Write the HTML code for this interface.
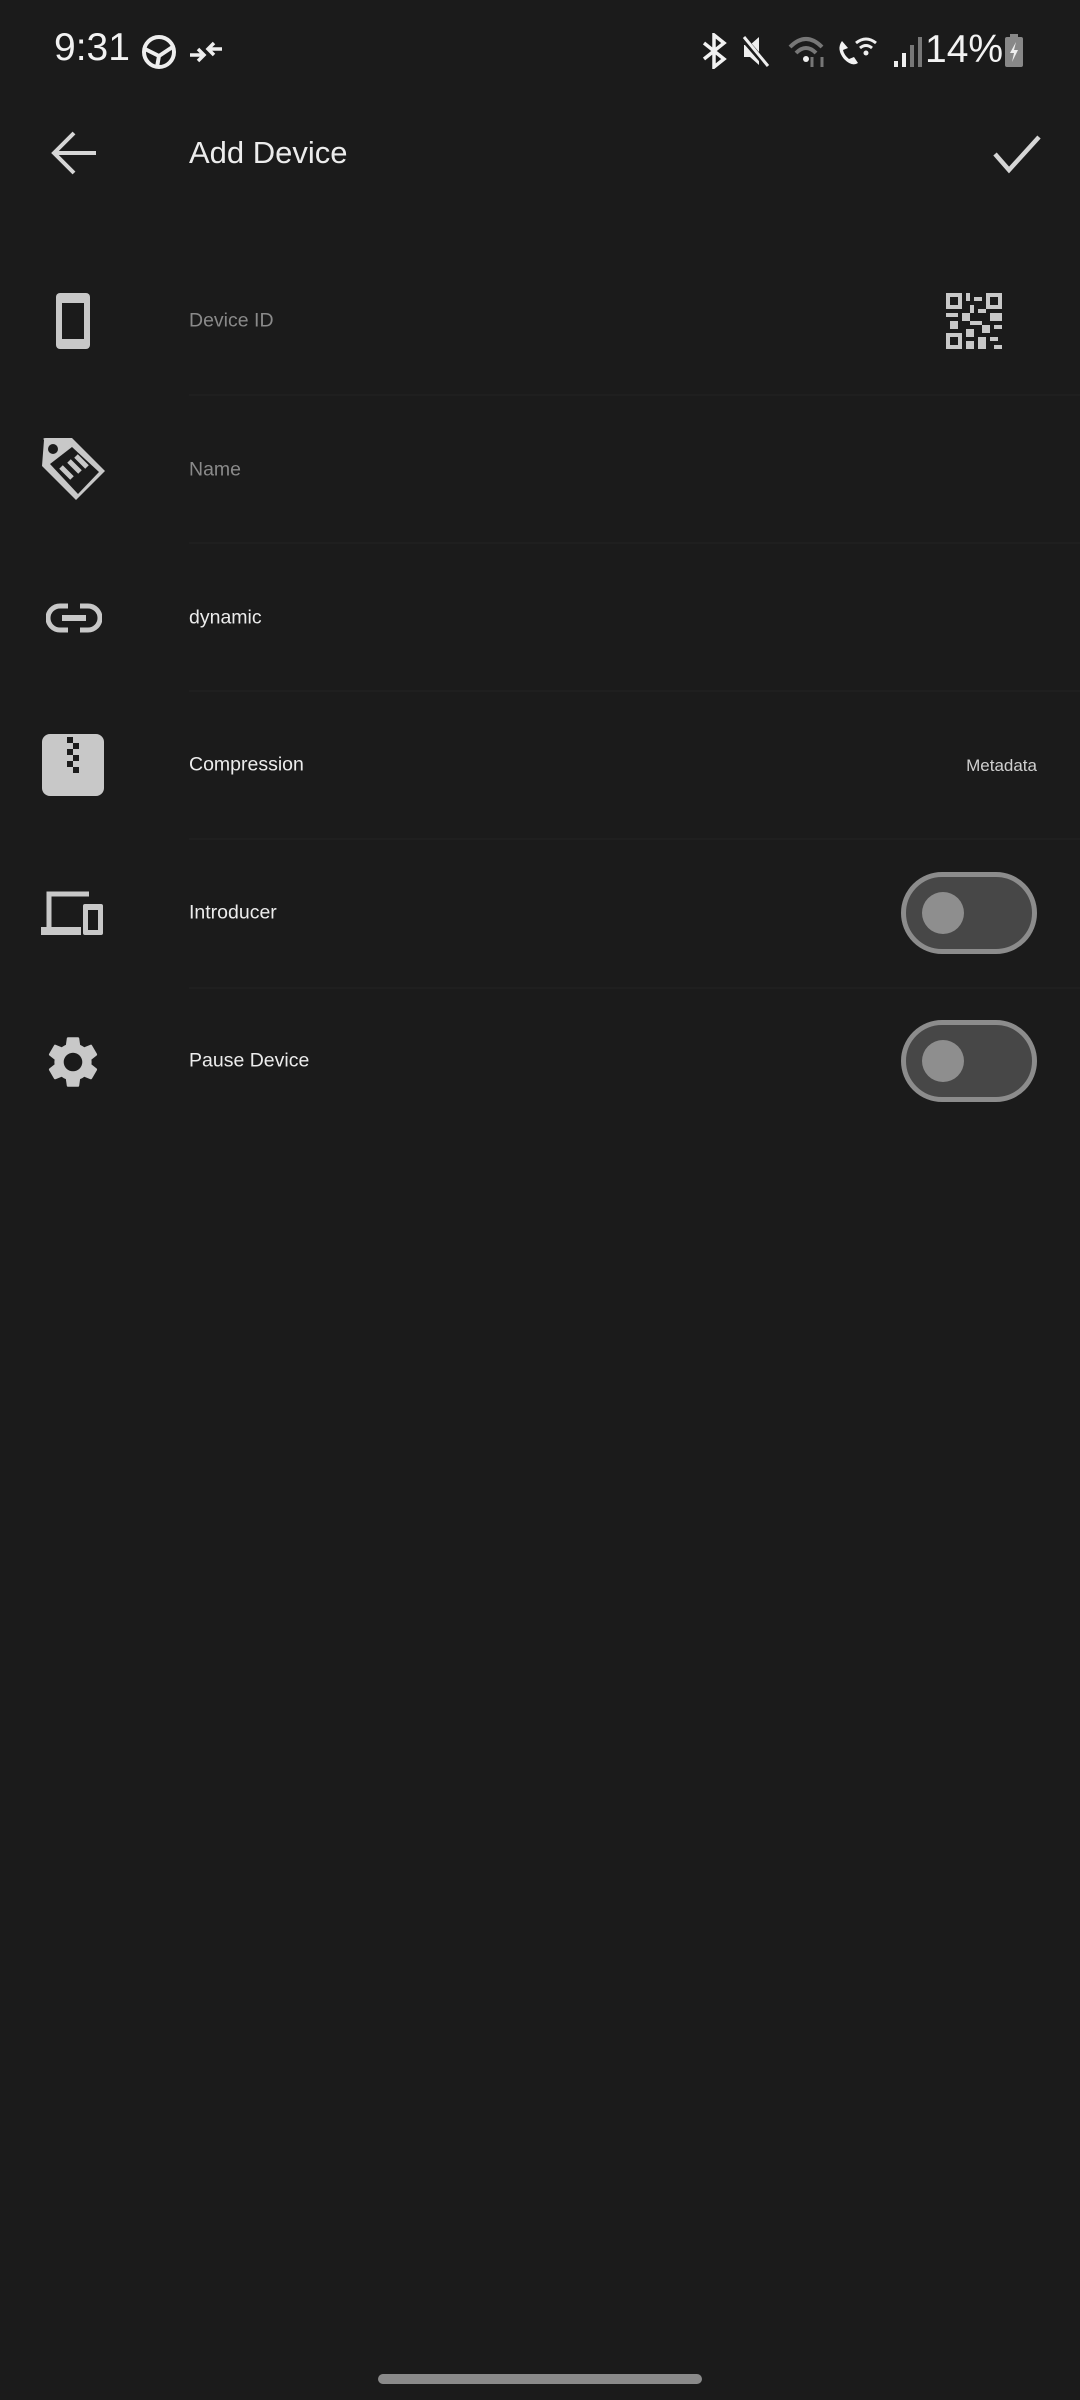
<!DOCTYPE html>
<html><head><meta charset="utf-8"><style>
html,body{margin:0;padding:0;background:#1b1b1b;width:1080px;height:2400px;overflow:hidden;font-family:"Liberation Sans",sans-serif;}
.abs{position:absolute}
.t{position:absolute;left:189px;font-size:19.5px;color:#ececec;transform:translateY(-50%)}
.div{position:absolute;left:189px;right:0;height:2px;background:#1f1f1f}
.tog{position:absolute;left:901px;width:126px;height:72px;border:5px solid #8c8c8c;border-radius:42px;background:#474747}
.tog i{position:absolute;left:16px;top:15px;width:42px;height:42px;border-radius:50%;background:#8e8e8e}
</style></head><body>
<div class="abs" style="left:54px;top:26px;font-size:39px;color:#f2f2f2;">9:31</div>
<svg class="abs" style="left:140px;top:32px" width="40" height="40" viewBox="0 0 40 40"><circle cx="19" cy="20" r="15" fill="none" stroke="#eee" stroke-width="4"/><path d="M5 17 L19 24 L34 14 M19 24 L17 35" stroke="#eee" stroke-width="4" fill="none"/></svg>
<svg class="abs" style="left:188px;top:37px" width="36" height="30" viewBox="0 0 36 30"><path d="M2 18h14M10 12l6 6-6 6M34 12H20M26 6l-6 6 6 6" stroke="#eee" stroke-width="3.5" fill="none"/></svg>
<svg class="abs" style="left:700px;top:33px" width="330" height="36" viewBox="0 0 330 36">
<path d="M4 10 L24 26 L14 34 V2 L24 10 L4 26" stroke="#f2f2f2" stroke-width="3.5" fill="none"/>
<path d="M44 12h6l9-8v28l-9-8h-6z" fill="#eee"/><path d="M42 4 L68 34" stroke="#1b1b1b" stroke-width="6"/><path d="M44 4 L68 33" stroke="#eee" stroke-width="3"/>
<path d="M90 14 Q106 -2 122 14 M96 20 Q106 10 116 20" stroke="#777" stroke-width="4" fill="none"/><circle cx="106" cy="26" r="3" fill="#eee"/><path d="M112 24v10M122 34V24" stroke="#777" stroke-width="3"/>
<path d="M142 8 q-6 8 2 18 q8 8 14 4 l-4 -6 l-5 2 q-5 -4 -6 -9 l5 -2 z" fill="#f2f2f2"/><path d="M156 10 Q166 2 176 10 M160 15 Q166 10 172 15" stroke="#eee" stroke-width="3" fill="none"/><circle cx="166" cy="20" r="2.5" fill="#eee"/>
<rect x="194" y="28" width="4" height="6" fill="#eee"/><rect x="202" y="20" width="4" height="14" fill="#eee"/><rect x="210" y="12" width="4" height="22" fill="#777"/><rect x="218" y="4" width="4" height="30" fill="#777"/>
</svg>
<div class="abs" style="left:925px;top:28px;font-size:39px;color:#f2f2f2;">14%</div>
<svg class="abs" style="left:1004px;top:34px" width="20" height="34" viewBox="0 0 20 34"><rect x="6" y="0" width="8" height="4" fill="#888"/><rect x="1" y="3" width="18" height="30" rx="2" fill="#888"/><path d="M12 8 L6 19 H10 L8 28 L14 16 H10 Z" fill="#eee"/></svg>

<svg class="abs" style="left:50px;top:130px" width="48" height="46" viewBox="0 0 48 46"><path d="M46 23H5M24 3L4 23l20 20" stroke="#d6d6d6" stroke-width="4" fill="none"/></svg>
<div class="abs" style="left:189px;top:135px;font-size:31px;color:#ececec;">Add Device</div>
<svg class="abs" style="left:992px;top:134px" width="50" height="40" viewBox="0 0 50 40"><path d="M3 20l14 16L47 3" stroke="#d6d6d6" stroke-width="4.5" fill="none"/></svg>

<svg class="abs" style="left:54px;top:291px" width="38" height="60" viewBox="0 0 38 60"><rect x="2" y="2" width="34" height="56" rx="4" fill="#c8c8c8"/><rect x="8" y="12" width="22" height="36" fill="#1b1b1b"/></svg>
<div class="t" style="top:321px;color:#8a8a8a">Device ID</div>
<svg class="abs" style="left:946px;top:293px" width="56" height="56" viewBox="0 0 14 14" shape-rendering="crispEdges"><g fill="#c8c8c8"><path d="M0 0h4v4H0zM10 0h4v4h-4zM0 10h4v4H0z"/></g><g fill="#1b1b1b"><rect x="1" y="1" width="2" height="2"/><rect x="11" y="1" width="2" height="2"/><rect x="1" y="11" width="2" height="2"/></g><g fill="#c8c8c8"><rect x="5" y="0" width="1" height="2"/><rect x="7" y="1" width="2" height="1"/><rect x="6" y="3" width="1" height="2"/><rect x="0" y="5" width="3" height="1"/><rect x="4" y="5" width="2" height="2"/><rect x="8" y="4" width="2" height="1"/><rect x="11" y="5" width="3" height="2"/><rect x="1" y="7" width="2" height="2"/><rect x="6" y="7" width="3" height="1"/><rect x="9" y="8" width="2" height="2"/><rect x="12" y="8" width="2" height="1"/><rect x="5" y="9" width="2" height="2"/><rect x="8" y="11" width="2" height="3"/><rect x="11" y="11" width="2" height="1"/><rect x="12" y="13" width="2" height="1"/><rect x="5" y="12" width="2" height="2"/></g></svg>
<div class="div" style="top:394px"></div>

<svg class="abs" style="left:0;top:400px" width="200" height="160" viewBox="0 0 200 160"><path d="M44 40 Q42 38 46 38 L72 38 L105 71 L76 100 L42 66 Z" fill="#c8c8c8"/><circle cx="53" cy="49" r="5" fill="#1b1b1b"/><path d="M50 64 L72 47 L99 72 L78 94 Z" fill="#1b1b1b"/><path d="M61 67 L72 78 M69 61 L80 72 M76 56 L87 67" stroke="#c8c8c8" stroke-width="5"/></svg>
<div class="t" style="top:470px;color:#8a8a8a">Name</div>
<div class="div" style="top:542px"></div>

<svg class="abs" style="left:46px;top:603px" width="56" height="30" viewBox="0 0 56 30"><path d="M22 3H14a12 12 0 0 0 0 24h8M34 3h8a12 12 0 0 1 0 24h-8" stroke="#c8c8c8" stroke-width="5" fill="none"/><rect x="16" y="12" width="24" height="6" fill="#c8c8c8"/></svg>
<div class="t" style="top:618px">dynamic</div>
<div class="div" style="top:690px"></div>

<svg class="abs" style="left:41px;top:733px" width="64" height="64" viewBox="0 0 64 64"><rect x="1" y="1" width="62" height="62" rx="8" fill="#c8c8c8"/><g fill="#1b1b1b"><rect x="26" y="4" width="6" height="6"/><rect x="32" y="10" width="6" height="6"/><rect x="26" y="16" width="6" height="6"/><rect x="32" y="22" width="6" height="6"/><rect x="26" y="28" width="6" height="6"/><rect x="32" y="34" width="6" height="6"/></g></svg>
<div class="t" style="top:765px">Compression</div>
<div class="abs" style="right:43px;top:766px;transform:translateY(-50%);font-size:17px;color:#cfcfcf">Metadata</div>
<div class="div" style="top:838px"></div>

<svg class="abs" style="left:41px;top:890px" width="64" height="46" viewBox="0 0 64 46"><path d="M48 4H8v36" stroke="#c8c8c8" stroke-width="5" fill="none"/><rect x="0" y="37" width="40" height="8" fill="#c8c8c8"/><rect x="42" y="14" width="20" height="31" rx="2" fill="#c8c8c8"/><rect x="47" y="20" width="10" height="20" fill="#1b1b1b"/></svg>
<div class="t" style="top:913px">Introducer</div>
<div class="tog" style="top:872px"><i></i></div>
<div class="div" style="top:987px"></div>

<svg class="abs" style="left:42px;top:1030px" width="62" height="64" viewBox="0 0 24 24"><path fill="#c8c8c8" d="M19.14 12.94c.04-.3.06-.61.06-.94 0-.32-.02-.64-.07-.94l2.03-1.58a.49.49 0 0 0 .12-.61l-1.920-3.320a.49.49 0 0 0-.59-.22l-2.39.96c-.5-.38-1.03-.7-1.62-.94l-.36-2.54a.48.48 0 0 0-.48-.41h-3.84c-.24 0-.43.17-.47.41l-.36 2.54c-.59.24-1.13.57-1.62.94l-2.39-.96a.48.48 0 0 0-.59.22L2.74 8.87c-.12.21-.08.47.12.61l2.03 1.58c-.05.3-.09.63-.09.94s.02.64.07.94l-2.03 1.58a.49.49 0 0 0-.12.61l1.92 3.32c.12.22.37.29.59.22l2.39-.96c.5.38 1.03.7 1.62.94l.36 2.54c.05.24.24.41.48.41h3.84c.24 0 .44-.17.47-.41l.36-2.54c.59-.24 1.13-.56 1.62-.94l2.39.96c.22.08.47 0 .59-.22l1.92-3.32c.12-.22.07-.47-.12-.61l-2.010-1.580zM12 15.6c-1.98 0-3.6-1.62-3.6-3.6s1.62-3.6 3.6-3.6 3.6 1.62 3.6 3.6-1.62 3.6-3.6 3.6z"/></svg>
<div class="t" style="top:1061px">Pause Device</div>
<div class="tog" style="top:1020px"><i></i></div>

<div class="abs" style="left:378px;top:2374px;width:324px;height:10px;border-radius:5px;background:#8a8a8a"></div>
</body></html>
